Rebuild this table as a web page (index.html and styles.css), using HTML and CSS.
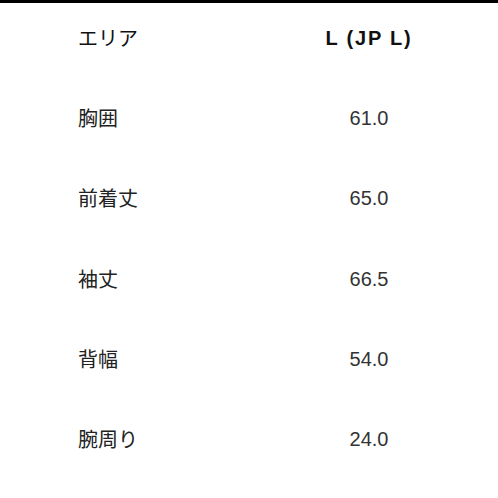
FILE: index.html
```html
<!DOCTYPE html>
<html lang="ja">
<head>
<meta charset="utf-8">
<link rel="stylesheet" href="styles.css">
</head>
<body>
<div class="bar"></div>
<div class="table">
  <div class="row head"><div class="label">エリア</div><div class="val">L (JP L)</div></div>
  <div class="row"><div class="label">胸囲</div><div class="val">61.0</div></div>
  <div class="row"><div class="label">前着丈</div><div class="val">65.0</div></div>
  <div class="row"><div class="label">袖丈</div><div class="val">66.5</div></div>
  <div class="row"><div class="label">背幅</div><div class="val">54.0</div></div>
  <div class="row"><div class="label">腕周り</div><div class="val">24.0</div></div>
</div>
</body>
</html>
```
FILE: styles.css
```css
html, body {
  margin: 0;
  padding: 0;
  background: #fff;
}
body {
  width: 498px;
  height: 498px;
  overflow: hidden;
  font-family: "Liberation Sans", "Noto Sans CJK JP", sans-serif;
  color: #222;
}
.bar {
  height: 3px;
  background: #000;
}
.table {
  display: flex;
  flex-direction: column;
}
.row {
  display: grid;
  grid-template-columns: 162px 258px;
  padding-left: 78px;
  height: 80.3px;
  align-items: center;
  font-size: 20px;
  line-height: 24px;
}
.row.head {
  height: 69px;
  padding-bottom: 6px;
}
.label {
  font-family: "Noto Sans CJK JP", sans-serif;
  font-weight: 400;
  color: #222;
}
.head .label {
  color: #111;
}
.val {
  text-align: center;
  color: #333;
}
.head .val {
  font-weight: 700;
  letter-spacing: 1.8px;
  color: #111;
}
```
